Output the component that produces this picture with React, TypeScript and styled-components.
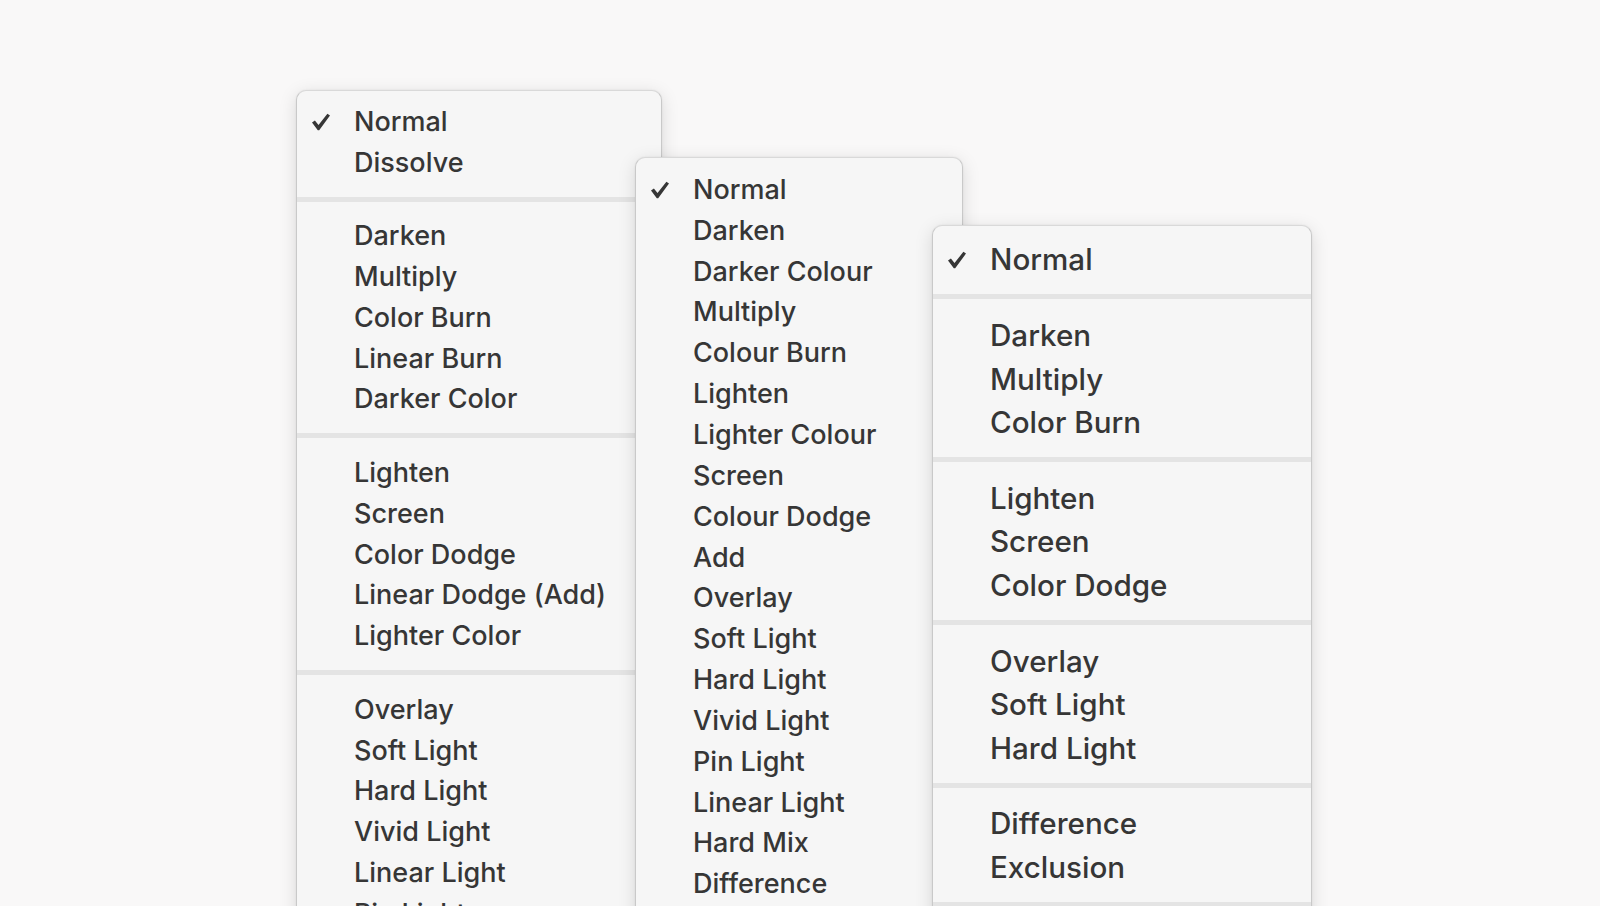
import styled, { createGlobalStyle } from "styled-components";

const GlobalStyle = createGlobalStyle`
  html, body {
    margin: 0;
    padding: 0;
    height: 906px;
    overflow: hidden;
    background: #f9f8f8;
  }
  body {
    font-family: Inter, "Liberation Sans", Arial, sans-serif;
    color: #363636;
  }
`;

type Entry = string | null;

// null = separator line
const photoshop: Entry[] = [
  "Normal", "Dissolve", null,
  "Darken", "Multiply", "Color Burn", "Linear Burn", "Darker Color", null,
  "Lighten", "Screen", "Color Dodge", "Linear Dodge (Add)", "Lighter Color", null,
  "Overlay", "Soft Light", "Hard Light", "Vivid Light", "Linear Light", "Pin Light", "Hard Mix", null,
  "Difference", "Exclusion", "Subtract", "Divide",
];

const affinity: Entry[] = [
  "Normal", "Darken", "Darker Colour", "Multiply", "Colour Burn", "Lighten",
  "Lighter Colour", "Screen", "Colour Dodge", "Add", "Overlay", "Soft Light",
  "Hard Light", "Vivid Light", "Pin Light", "Linear Light", "Hard Mix",
  "Difference", "Exclusion", "Subtract",
];

const sketch: Entry[] = [
  "Normal", null,
  "Darken", "Multiply", "Color Burn", null,
  "Lighten", "Screen", "Color Dodge", null,
  "Overlay", "Soft Light", "Hard Light", null,
  "Difference", "Exclusion", null,
  "Hue", "Saturation", "Color", "Luminosity",
];

const Stage = styled.div`
  display: flex;
  align-items: flex-start;
  padding: 90px 0 0 296px;
`;

const Menu = styled.div<{ $width: number; $drop: number; $overlap: number; $layer: number; $pad: number }>`
  position: relative;
  z-index: ${(p) => p.$layer};
  flex: none;
  width: ${(p) => p.$width}px;
  margin-top: ${(p) => p.$drop}px;
  margin-left: ${(p) => -p.$overlap}px;
  padding-top: ${(p) => p.$pad}px;
  background: #f6f6f6;
  border: 1px solid #c9c9c9;
  border-top-color: #d9d9d9;
  border-radius: 10px 10px 0 0;
  box-shadow: 0 4px 18px rgba(0, 0, 0, 0.13), 0 0 2px rgba(0, 0, 0, 0.08);
`;

const Item = styled.div<{ $row: number; $size: number }>`
  display: grid;
  grid-template-columns: 57px 1fr;
  align-items: center;
  height: ${(p) => p.$row}px;
  font-size: ${(p) => p.$size}px;
  font-weight: 500;
  white-space: nowrap;
`;

const CheckCell = styled.span`
  display: flex;
  align-items: center;
  padding-left: 14px;
  padding-top: 1px;
`;

const Separator = styled.div<{ $above: number; $below: number }>`
  height: 5px;
  margin: ${(p) => p.$above}px 0 ${(p) => p.$below}px;
  background: #e4e4e4;
`;

const Check = () => (
  <svg width="20" height="18" viewBox="0 0 20 18">
    <path d="M1 9.6 L3.9 7.6 L7.5 11.9 L16.4 0.8 L19 2.6 L8.2 17.2 L6.8 17.2 Z" fill="#363636" />
  </svg>
);

function BlendMenu(props: {
  entries: Entry[];
  width: number;
  drop: number;
  overlap: number;
  layer: number;
  pad: number;
  row: number;
  size: number;
  gap: [number, number];
}) {
  return (
    <Menu
      $width={props.width}
      $drop={props.drop}
      $overlap={props.overlap}
      $layer={props.layer}
      $pad={props.pad}
    >
      {props.entries.map((entry, i) =>
        entry === null ? (
          <Separator key={i} $above={props.gap[0]} $below={props.gap[1]} />
        ) : (
          <Item key={i} $row={props.row} $size={props.size}>
            <CheckCell>{i === 0 ? <Check /> : null}</CheckCell>
            <span>{entry}</span>
          </Item>
        )
      )}
    </Menu>
  );
}

export default function App() {
  return (
    <>
      <GlobalStyle />
      <Stage>
        <BlendMenu entries={photoshop} width={364} drop={0} overlap={0} layer={1}
          pad={10} row={40.8} size={27} gap={[14, 13.8]} />
        <BlendMenu entries={affinity} width={326} drop={67} overlap={27} layer={2}
          pad={11} row={40.85} size={27} gap={[14, 13.8]} />
        <BlendMenu entries={sketch} width={378} drop={135} overlap={31} layer={3}
          pad={11.5} row={43.85} size={29.6} gap={[13, 13.4]} />
      </Stage>
    </>
  );
}
